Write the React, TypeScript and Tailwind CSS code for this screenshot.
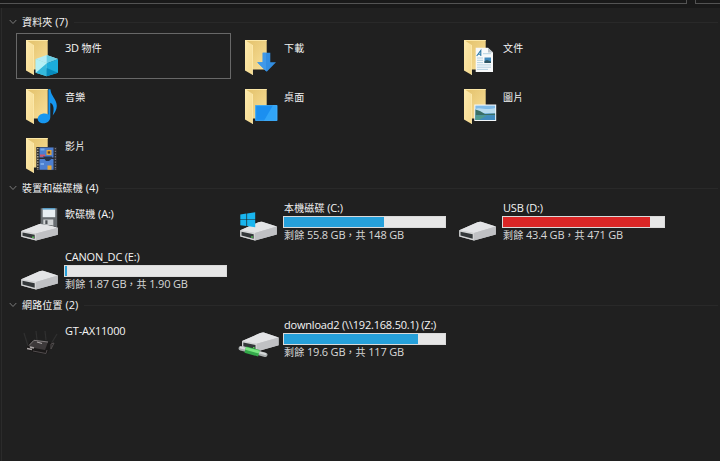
import type { ReactNode } from 'react';

interface Entry {
    name: string;
    icon: ReactNode;
    selected?: boolean;
    usage?: { percent: number; free: string; full?: boolean };
}

function FolderShape({ children }: { children?: ReactNode }) {
    return (
        <svg width="48" height="46" viewBox="0 0 48 46">
            <defs>
                <linearGradient id="folderBack" x1="0" y1="0" x2="1" y2="1">
                    <stop offset="0" stopColor="#e2c069" />
                    <stop offset="1" stopColor="#f9e09a" />
                </linearGradient>
                <linearGradient id="folderFlap" x1="0" y1="0" x2="1" y2="1">
                    <stop offset="0" stopColor="#fdeaae" />
                    <stop offset="1" stopColor="#f5d98d" />
                </linearGradient>
            </defs>
            <path d="M10 7H31.7V36.5H10Z" fill="url(#folderBack)" />
            <path d="M10 7H31.7V8H10Z" fill="#fbe7a6" />
            <path d="M10 7L17.8 12V42L10 37.5Z" fill="url(#folderFlap)" />
            <path d="M17.5 12V42" stroke="#fff0b8" strokeWidth="0.6" />
            {children}
        </svg>
    );
}

function ObjectsIcon() {
    return (
        <FolderShape>
            <path d="M30.7 22L42 26L30.7 30.2L19.7 26Z" fill="#b5edf6" />
            <path d="M30.7 22L42 26L30.7 30.2Z" fill="#69cde4" />
            <path d="M19.7 26L30.7 30.2V43.3L19.7 39.7Z" fill="#7adced" />
            <path d="M19.7 39.7L30.7 30.2V43.3Z" fill="#35b9dc" />
            <path d="M42 26L30.7 30.2V43.3L42 39.7Z" fill="#1caddb" />
            <path d="M42 39.7L30.7 35V43.3Z" fill="#078bbd" />
            <path d="M19.7 26V39.7L24 36L30.7 30.2Z" fill="#b3f0f5" />
        </FolderShape>
    );
}

function DownloadsIcon() {
    return (
        <FolderShape>
            <path d="M27.7 19.7H35.3V29.3H41L31.7 38.7L22.2 29.3H27.7Z" fill="#328ee2" />
            <path d="M27.7 19.7H31V38L22.2 29.3H27.7Z" fill="#4099e9" />
        </FolderShape>
    );
}

function DocumentsIcon() {
    return (
        <FolderShape>
            <path d="M21.7 14.7H34L39 19.5V39H21.7Z" fill="#f7f9fa" />
            <path d="M34 14.7V19.5H39Z" fill="#b9c3ca" />
            <path d="M22.7 23L26.8 17.5V23M24 21.2H27" stroke="#2f7ca9" strokeWidth="1.1" fill="none" />
            <path d="M29 20.7H37M23 25H29M23 27.3H29M23 29.6H29M23 31.9H37M23 34.2H37M23 36.4H34" stroke="#a3c8da" strokeWidth="0.8" />
            <path d="M30.5 24.5H37V30H30.5Z" fill="#418bbd" />
            <path d="M30.5 28L33 27L37 28.5V30H30.5Z" fill="#2e5562" />
        </FolderShape>
    );
}

function MusicIcon() {
    return (
        <FolderShape>
            <path
                d="M32.3 7.3H34.4C35 14.5 40.8 17 40.8 24C40.8 28 38.5 31 36.7 33.5C38.3 27.5 38 22.5 34.3 20.8V35C34.3 38.5 31.5 41.3 27.4 41.3C24 41.3 21.7 39.4 21.7 36.8C21.7 33.7 25 31.5 28.4 31.5C30 31.5 31.3 31.9 32.3 32.5Z"
                fill="#1697f0"
            />
        </FolderShape>
    );
}

function DesktopIcon() {
    return (
        <FolderShape>
            <path d="M20.3 23.2H42.2V38.8H20.3Z" fill="#1b8ff0" />
            <path d="M38 23.2H42.2V38.8H29Z" fill="#31a5f8" />
            <path d="M20.7 23.6H41.8V38.4H20.7Z" fill="none" stroke="#46b1fa" strokeWidth="0.7" />
        </FolderShape>
    );
}

function PicturesIcon() {
    return (
        <FolderShape>
            <path d="M20.3 22.5H42.2V39H20.3Z" fill="#f2f6f8" />
            <path d="M21.4 23.6H41.1V38H21.4Z" fill="#7fbbe8" />
            <path d="M21.4 27C26 24.5 32 29 41.1 26V31H21.4Z" fill="#b9dcef" />
            <path d="M21.4 27.5L26 29L31 32L41.1 31.5V33.5H21.4Z" fill="#396f67" />
            <path d="M21.4 33.2H41.1V38H21.4Z" fill="#3f8abd" />
            <path d="M21.4 33.2L33 33.5L25 38H21.4Z" fill="#4f9a8e" />
        </FolderShape>
    );
}

function VideosIcon() {
    return (
        <FolderShape>
            <path d="M20.3 16H41V39.2H20.3Z" fill="#2b2b30" />
            <path d="M23.5 16.5H37.5V26.5H23.5ZM23.5 28H37.5V38.7H23.5Z" fill="#4d7fd0" />
            <path d="M30.5 19H35.5V24H30.5ZM31.5 34.5H35.5V38.7H31.5Z" fill="#e7a83a" />
            <path d="M31.7 20.3H34.2V22.6H31.7Z" fill="#5d3a24" />
            <path d="M24 23.5H29V25.8H24Z" fill="#cb5772" />
            <path d="M27 25.5H36V27.5L33 30H30Z" fill="#26334a" />
            <path d="M24.5 17.5H28.5V19.5H24.5ZM24.5 32H28V34H24.5Z" fill="#79a9e8" />
            <path d="M21.8 17V39" stroke="#c5c0ad" strokeWidth="1.3" strokeDasharray="1.3 1.4" />
            <path d="M39.4 17V39" stroke="#77777c" strokeWidth="1.3" strokeDasharray="1.3 1.4" />
        </FolderShape>
    );
}

function DriveBody({ led = false }: { led?: boolean }) {
    return (
        <>
            <path d="M5.3 31.2L23.5 23.2Q25 22.6 27 22.8L41.8 27.6V35.4L20 41.6L5.3 37.5Z" fill="#c5c6c8" />
            <path d="M5.3 31.2L23.5 23.2Q25 22.6 27 22.8L41.8 27.6L20 34Z" fill="#e3e4e6" />
            <path d="M20 34L41.8 27.6V35.4L20 41.6Z" fill="#c0c1c4" />
            <path d="M5.3 31.2L20 34V41.6L5.3 37.5Z" fill="#d3d4d5" />
            <path d="M6.5 32.8L18.7 35.3V39.8L6.5 36.5Z" fill="#34383a" />
            {led && <path d="M17 37.2V38.8" stroke="#5ee85c" strokeWidth="1.4" />}
        </>
    );
}

function DriveIcon() {
    return (
        <svg width="48" height="46" viewBox="0 0 48 46">
            <DriveBody />
        </svg>
    );
}

function FloppyDriveIcon() {
    return (
        <svg width="48" height="46" viewBox="0 0 48 46">
            <g transform="translate(0 4) scale(1 0.9)">
                <DriveBody led />
            </g>
            <path d="M24.7 9.2H41.2V28.5L37.5 27L24.7 25Z" fill="#686d71" />
            <path d="M26.7 9.2H39.2V18.2H26.7Z" fill="#e8eef2" />
            <path d="M26.7 9.2H39.2V10.5H26.7Z" fill="#3c8fc1" />
            <path d="M27.3 20.5H37.3V26.5L27.3 25.2Z" fill="#d1d4d6" />
            <path d="M29.3 21.3H31.5V25H29.3Z" fill="#4b4f53" />
        </svg>
    );
}

function SystemDriveIcon() {
    return (
        <svg width="48" height="46" viewBox="0 0 48 46">
            <DriveBody led />
            <path d="M5.3 15.4L11.4 14.5V20.4H5.3ZM12.1 14.4L20.2 13.3V20.4H12.1ZM5.3 21.1H11.4V27L5.3 26.2ZM12.1 21.1H20.2V28.2L12.1 27.1Z" fill="#19b5ef" />
        </svg>
    );
}

function NetworkDriveIcon() {
    return (
        <svg width="48" height="46" viewBox="0 0 48 46">
            <g transform="translate(1.8 -6.2)">
                <DriveBody led />
            </g>
            <path d="M5.8 32.3L30.3 38.8" stroke="#a9aeae" strokeWidth="4.4" strokeLinecap="round" />
            <path d="M5.8 31.5L30.3 38" stroke="#d6d9da" strokeWidth="2" strokeLinecap="round" />
            <path d="M10.3 33.6L24 37.3" stroke="#34a94a" strokeWidth="6.6" />
            <path d="M10.6 32.4L24.3 36.1" stroke="#79e681" strokeWidth="3" />
        </svg>
    );
}

function RouterIcon() {
    return (
        <svg width="48" height="46" viewBox="0 0 48 46">
            <path d="M8 17L12 30M20 15L21 24M29 15L30 24M41 18L35 28" stroke="#303030" strokeWidth="1.2" />
            <path d="M14.5 24L32 26L37 27L31 38L19 37L10 33Z" fill="#1b1919" />
            <path d="M13 30L18 24L32 26L29 34L13 31Z" fill="#3d393a" />
            <path d="M13 29.5L18 24.3L32 26" fill="none" stroke="#8a8586" strokeWidth="0.9" />
            <path d="M21 26L26 27.5M11 32.5L16 33.5M14 31L18 32" stroke="#a9a4a4" strokeWidth="1.3" />
            <path d="M17 35L30 37.5L31 34M35 28L38 27L35 33Z" fill="none" stroke="#514c4d" strokeWidth="1" />
        </svg>
    );
}

const folders: Entry[] = [
    { name: '3D 物件', icon: <ObjectsIcon />, selected: true },
    { name: '下載', icon: <DownloadsIcon /> },
    { name: '文件', icon: <DocumentsIcon /> },
    { name: '音樂', icon: <MusicIcon /> },
    { name: '桌面', icon: <DesktopIcon /> },
    { name: '圖片', icon: <PicturesIcon /> },
    { name: '影片', icon: <VideosIcon /> },
];

const drives: Entry[] = [
    { name: '軟碟機 (A:)', icon: <FloppyDriveIcon /> },
    { name: '本機磁碟 (C:)', icon: <SystemDriveIcon />, usage: { percent: 62, free: '剩餘 55.8 GB，共 148 GB' } },
    { name: 'USB (D:)', icon: <DriveIcon />, usage: { percent: 91.3, free: '剩餘 43.4 GB，共 471 GB', full: true } },
    { name: 'CANON_DC (E:)', icon: <DriveIcon />, usage: { percent: 1, free: '剩餘 1.87 GB，共 1.90 GB' } },
];

const network: Entry[] = [
    { name: 'GT-AX11000', icon: <RouterIcon /> },
    { name: 'download2 (\\\\192.168.50.1) (Z:)', icon: <NetworkDriveIcon />, usage: { percent: 83.3, free: '剩餘 19.6 GB，共 117 GB' } },
];

// Chinese runs are set a little smaller than the Latin ones
function Label({ text }: { text: string }) {
    return (
        <>
            {text.split(/([\u4e00-\u9fff\uff0c]+)/).map((run, i) => (
                <span key={i} className={i % 2 ? 'text-[10px] tracking-[0.15px]' : 'text-[11px]'}>
                    {run}
                </span>
            ))}
        </>
    );
}

function Tile({ name, icon, selected, usage }: Entry) {
    return (
        <div className={`flex h-[46px] w-[215px] tracking-[-0.2px] ${selected ? 'outline outline-1 -outline-offset-1 outline-[#686868]' : ''}`}>
            <div className="w-12 shrink-0">{icon}</div>
            {usage ? (
                <div className="flex flex-col pt-px">
                    <div className="h-4 pl-px leading-4">
                        <Label text={name} />
                    </div>
                    <div className="h-3 w-[163px] border border-[#dadada] bg-[#e6e6e6]">
                        <div
                            className={`h-full ${usage.full ? 'bg-[#da2626]' : 'bg-[#26a0da]'}`}
                            style={{ width: `${usage.percent}%` }}
                        />
                    </div>
                    <div className="h-4 pl-px leading-[14px] text-[#d8d8d8]">
                        <Label text={usage.free} />
                    </div>
                </div>
            ) : (
                <div className="pt-[7px] pl-px leading-4">
                    <Label text={name} />
                </div>
            )}
        </div>
    );
}

function Section({ title, items }: { title: string; items: Entry[] }) {
    return (
        <section>
            <div className="flex h-[22px] items-center pl-[9px] pr-[2px]">
                <svg width="8" height="6" viewBox="0 0 8 6" className="mr-[5px] shrink-0">
                    <path d="M0.7 1L4 4.5L7.3 1" fill="none" stroke="#858585" strokeWidth="0.9" />
                </svg>
                <h2 className="shrink-0 leading-[22px]">
                    <Label text={title} />
                </h2>
                <div className="ml-1.5 h-px flex-1 bg-[#292929]" />
            </div>
            <div className="grid grid-cols-[repeat(3,215px)] gap-x-1 gap-y-[3px] pl-4">
                {items.map((item) => (
                    <Tile key={item.name} {...item} />
                ))}
            </div>
        </section>
    );
}

export default function App() {
    return (
        <div className="flex h-[461px] w-[720px] flex-col overflow-hidden whitespace-nowrap bg-[#202020] font-['Open_Sans','Noto_Sans_CJK_TC',sans-serif] text-[11px] text-[#f4f4f4]">
            {/* Bottom edge of the address and search boxes */}
            <div className="flex h-2 shrink-0 gap-2 bg-[#191919]">
                <div className="h-1 w-[687px] border-r border-b border-[#535353]" />
                <div className="h-1 flex-1 border-b border-l border-[#535353]" />
            </div>
            <main className="ml-px flex-1 border-l border-[#2b2b2b] pt-[3px]">
                <div className="-ml-0.5">
                    <Section title="資料夾 (7)" items={folders} />
                    <Section title="裝置和磁碟機 (4)" items={drives} />
                    <Section title="網路位置 (2)" items={network} />
                </div>
            </main>
        </div>
    );
}
